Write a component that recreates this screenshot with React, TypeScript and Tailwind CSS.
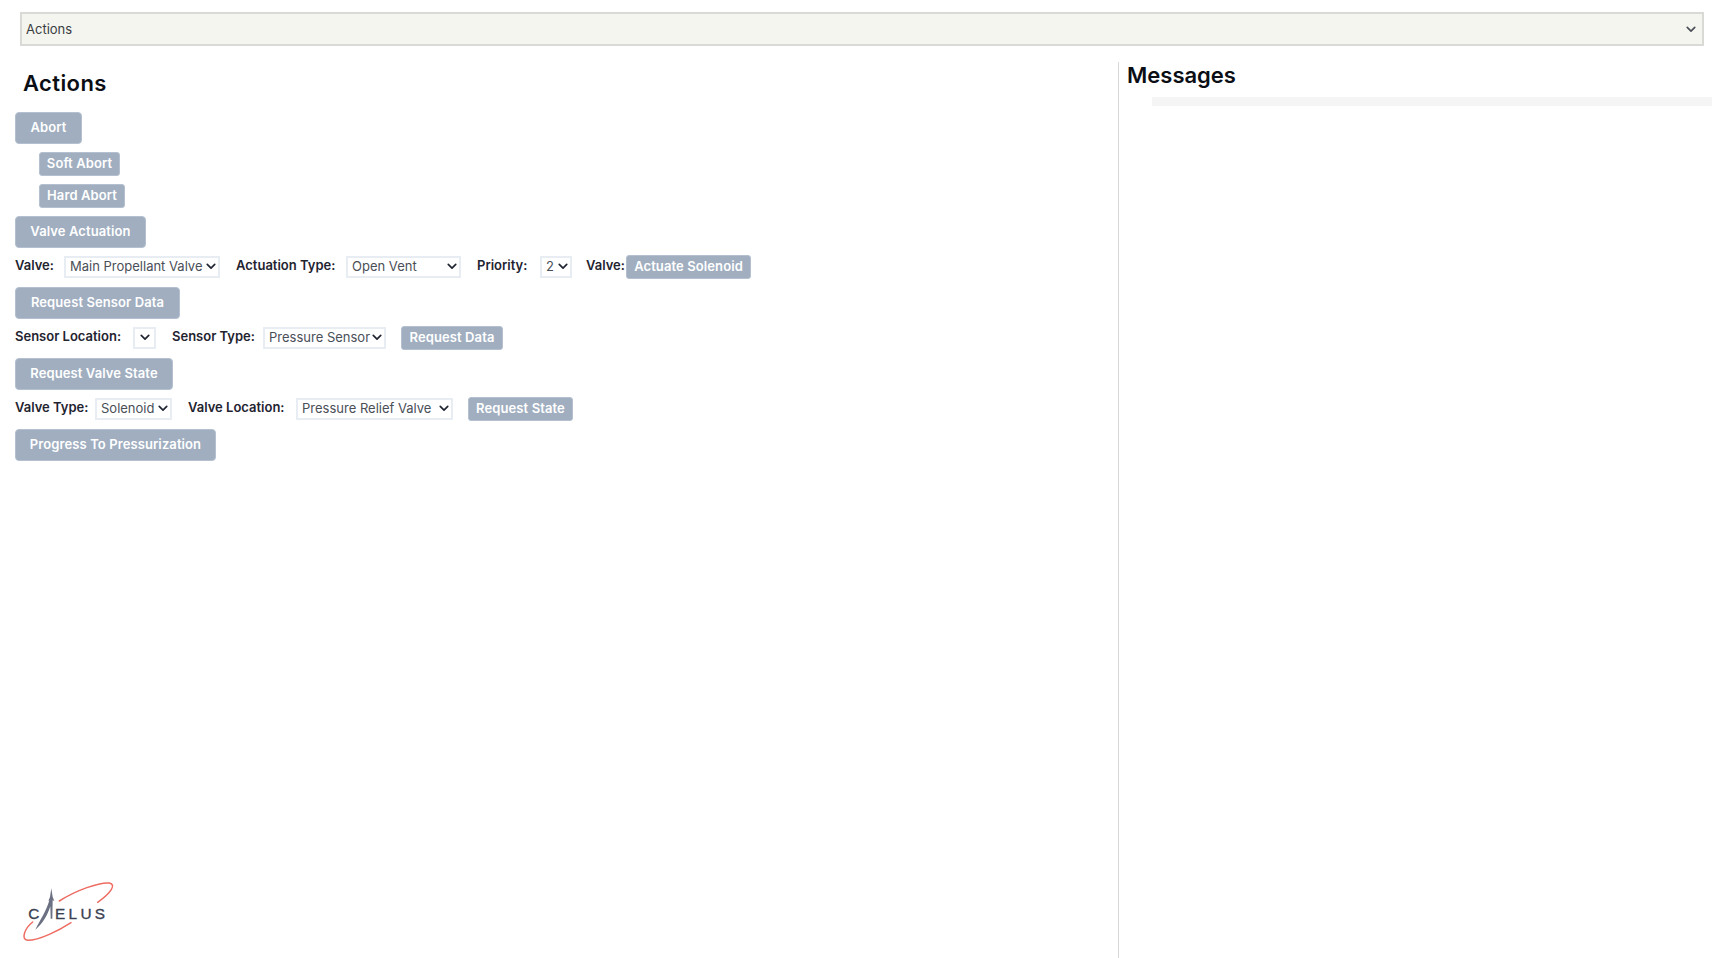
import React from "react";

const font = "font-['Inter','Liberation_Sans',sans-serif]";

function Big({ children, w }: { children: React.ReactNode; w: string }) {
  return (
    <button className={`${w} h-[32px] rounded-[4px] bg-[#a0aec0] border border-[#b4c0cf] text-white text-[13px] font-semibold tracking-[0.1px] flex items-center justify-center`}>
      {children}
    </button>
  );
}

function Small({ children, w }: { children: React.ReactNode; w: string }) {
  return (
    <button className={`${w} h-[24px] rounded-[3px] bg-[#a0aec0] border border-[#b4c0cf] text-white text-[13px] font-semibold tracking-[0.1px] flex items-center justify-center shrink-0`}>
      {children}
    </button>
  );
}

function Label({ children, w }: { children: React.ReactNode; w: string }) {
  return <span className={`${w} shrink-0 pb-[2px] text-[13px] font-semibold text-[#1f2430] whitespace-nowrap`}>{children}</span>;
}

function Chevron({ className }: { className: string }) {
  return (
    <svg viewBox="0 0 12 8" className={className} fill="none" stroke="currentColor" strokeWidth="2" strokeLinecap="round" strokeLinejoin="round">
      <path d="M1.5 1.5 6 6l4.5-4.5" />
    </svg>
  );
}

function Sel({ value, w, right = "right-[4px]" }: { value: string; w: string; right?: string }) {
  return (
    <div className={`${w} relative shrink-0 h-[22px] mb-[1px]`}>
      <select
        defaultValue={value}
        className="block w-full h-full appearance-none bg-white border-2 border-[#e8edf4] pl-[4px] text-[13px] leading-[15px] text-[#4a4f57] outline-none"
      >
        <option value={value}>{value}</option>
      </select>
      <Chevron className={`absolute ${right} top-[7px] w-[10px] h-[7px] text-[#1f2430] pointer-events-none`} />
    </div>
  );
}

function Logo() {
  return (
    <svg viewBox="0 0 312 210" className="w-[104px] h-[70px]">
      <path d="M130 72 C180 40 250 15 280 18 C302 22 285 48 245 76" fill="none" stroke="#ee6c62" strokeWidth="4.5" strokeLinecap="round" />
      <path d="M165 137 C130 160 70 190 35 190 C14 188 25 155 50 135" fill="none" stroke="#ee6c62" strokeWidth="4.5" strokeLinecap="round" />
      <path d="M106 34 L110 60 L115 72 L110 70 L109 125 L104 125 L103 88 C95 115 80 140 58 158 C72 130 92 100 100 70 L97 72 L102 60 Z" fill="#6b7182" />
      <text x="37" y="125" fontFamily="'Liberation Sans',sans-serif" fontSize="46" stroke="#3a4152" strokeWidth="1" fill="#3a4152">C</text>
      <text x="117" y="125" fontFamily="'Liberation Sans',sans-serif" fontSize="46" letterSpacing="10" stroke="#3a4152" strokeWidth="1" fill="#3a4152">ELUS</text>
    </svg>
  );
}

export default function App() {
  return (
    <div className={`${font} h-[958px] overflow-hidden bg-white flex flex-col`}>
      <div className="pt-[12px] pl-[20px] pr-[8px]">
        <div className="h-[34px] bg-[#f4f5ef] border-2 border-[#d9dad6] flex items-center justify-between pl-[4px] pr-[6px]">
          <span className="pt-[2px] text-[13px] text-[#3a3d42]">Actions</span>
          <Chevron className="w-[10px] h-[7px] text-[#4a4f57]" />
        </div>
      </div>

      <div className="flex flex-1 pt-[16px] min-h-0">
        <div className="w-[1118px] shrink-0 flex flex-col pl-[15px]">
          <h2 className="pl-[8px] pt-[6px] text-[22px] leading-[30px] font-semibold tracking-[0.4px] text-[#0b0e14]">Actions</h2>

          <div className="mt-[14px]"><Big w="w-[67px]">Abort</Big></div>
          <div className="mt-[8px] ml-[24px]"><Small w="w-[81px]">Soft Abort</Small></div>
          <div className="mt-[8px] ml-[24px]"><Small w="w-[86px]">Hard Abort</Small></div>
          <div className="mt-[8px]"><Big w="w-[131px]">Valve Actuation</Big></div>

          <div className="mt-[7px] h-[24px] flex items-center">
            <Label w="w-[49px]">Valve:</Label>
            <Sel value="Main Propellant Valve" w="w-[156px]" />
            <Label w="w-[110px] ml-[16px]">Actuation Type:</Label>
            <Sel value="Open Vent" w="w-[115px]" />
            <Label w="w-[63px] ml-[16px]">Priority:</Label>
            <Sel value="2" w="w-[32px]" />
            <Label w="w-[40px] ml-[14px]">Valve:</Label>
            <Small w="w-[125px]">Actuate Solenoid</Small>
          </div>

          <div className="mt-[8px]"><Big w="w-[165px]">Request Sensor Data</Big></div>

          <div className="mt-[7px] h-[24px] flex items-center">
            <Label w="w-[118px]">Sensor Location:</Label>
            <Sel value="" w="w-[23px]" right="right-[6px]" />
            <Label w="w-[91px] ml-[16px]">Sensor Type:</Label>
            <Sel value="Pressure Sensor" w="w-[123px]" />
            <div className="ml-[15px]"><Small w="w-[102px]">Request Data</Small></div>
          </div>

          <div className="mt-[8px]"><Big w="w-[158px]">Request Valve State</Big></div>

          <div className="mt-[7px] h-[24px] flex items-center">
            <Label w="w-[80px]">Valve Type:</Label>
            <Sel value="Solenoid" w="w-[77px]" />
            <Label w="w-[108px] ml-[16px]">Valve Location:</Label>
            <Sel value="Pressure Relief Valve" w="w-[157px]" />
            <div className="ml-[15px]"><Small w="w-[105px]">Request State</Small></div>
          </div>

          <div className="mt-[8px]"><Big w="w-[201px]">Progress To Pressurization</Big></div>

          <div className="mt-auto pl-[1px] pb-[11px]"><Logo /></div>
        </div>

        <div className="flex-1 min-w-0 border-l border-[#d9d9d9] flex flex-col">
          <h2 className="pl-[8px] text-[22px] leading-[26px] font-semibold text-[#0b0e14]">Messages</h2>
          <div className="mt-[9px] ml-[33px] h-[9px] bg-[#f5f5f5]" />
        </div>
      </div>
    </div>
  );
}
